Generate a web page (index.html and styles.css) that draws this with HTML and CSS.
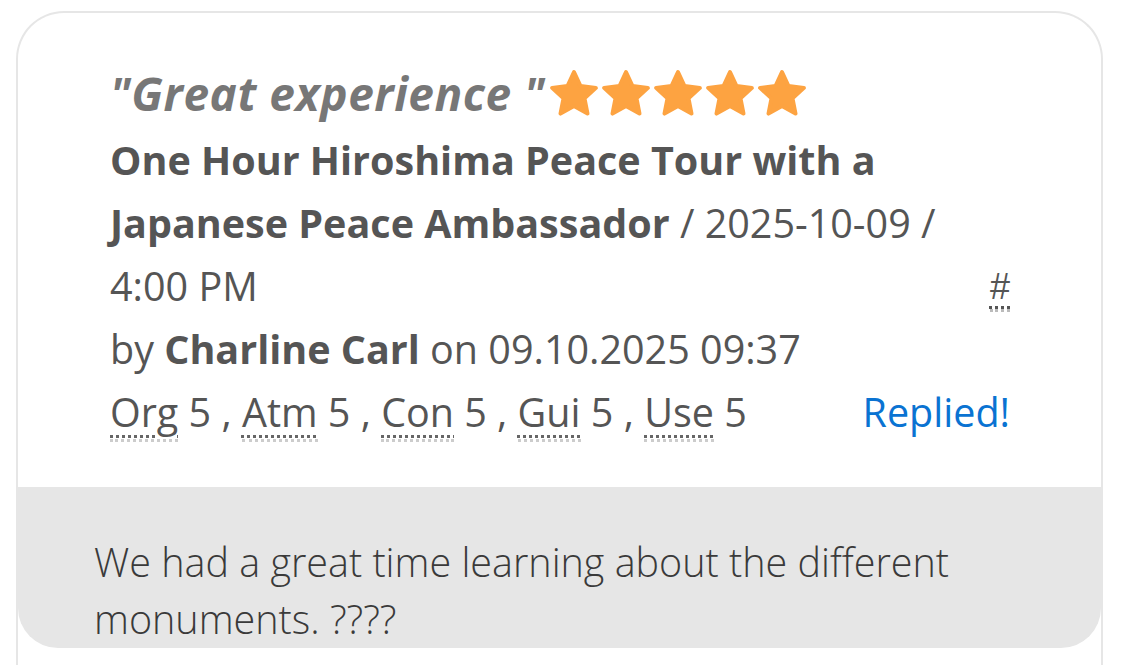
FILE: index.html
```html
<!DOCTYPE html>
<html lang="en">
<head>
<meta charset="utf-8">
<title>Review</title>
<link rel="stylesheet" href="styles.css">
</head>
<body>
<div class="card">
  <div class="head">
    <div class="title">
      <span class="quote">"Great experience "</span>
      <span class="stars">
        <svg class="star" viewBox="0 0 50 48"><path d="M25 3 L31.5 17.1 L46.9 18.9 L35.5 29.4 L38.5 44.6 L25 37 L11.5 44.6 L14.5 29.4 L3.1 18.9 L18.5 17.1 Z"/></svg>
        <svg class="star" viewBox="0 0 50 48"><path d="M25 3 L31.5 17.1 L46.9 18.9 L35.5 29.4 L38.5 44.6 L25 37 L11.5 44.6 L14.5 29.4 L3.1 18.9 L18.5 17.1 Z"/></svg>
        <svg class="star" viewBox="0 0 50 48"><path d="M25 3 L31.5 17.1 L46.9 18.9 L35.5 29.4 L38.5 44.6 L25 37 L11.5 44.6 L14.5 29.4 L3.1 18.9 L18.5 17.1 Z"/></svg>
        <svg class="star" viewBox="0 0 50 48"><path d="M25 3 L31.5 17.1 L46.9 18.9 L35.5 29.4 L38.5 44.6 L25 37 L11.5 44.6 L14.5 29.4 L3.1 18.9 L18.5 17.1 Z"/></svg>
        <svg class="star" viewBox="0 0 50 48"><path d="M25 3 L31.5 17.1 L46.9 18.9 L35.5 29.4 L38.5 44.6 L25 37 L11.5 44.6 L14.5 29.4 L3.1 18.9 L18.5 17.1 Z"/></svg>
      </span>
    </div>
    <div class="product-row">
      <p class="product"><strong>One Hour Hiroshima Peace Tour with a Japanese Peace Ambassador</strong> / 2025-10-09 / 4:00 PM</p>
      <a class="anchor" href="#"><abbr title="Permalink">#</abbr></a>
    </div>
    <p class="byline">by <strong>Charline Carl</strong> on 09.10.2025 09:37</p>
    <div class="ratings-row">
      <p class="ratings"><abbr title="Organisation">Org</abbr> 5 , <abbr title="Atmosphere">Atm</abbr> 5 , <abbr title="Content">Con</abbr> 5 , <abbr title="Guide">Gui</abbr> 5 , <abbr title="Usefulness">Use</abbr> 5</p>
      <span class="replied">Replied!</span>
    </div>
  </div>
  <div class="body">
    <p>We had a great time learning about the different monuments. ????</p>
  </div>
</div>
</body>
</html>
```

FILE: styles.css
```css
* { box-sizing: border-box; }
html, body {
  margin: 0;
  padding: 0;
  background: #fff;
  overflow: hidden;
}
body {
  font-family: "Open Sans", "Noto Sans", "DejaVu Sans", sans-serif;
  color: #555;
}
.card {
  margin: 11px 18px 0 16px;
  border: 2px solid #e6e6e6;
  border-bottom: none;
  border-radius: 48px 48px 0 0;
  height: 700px;
}
.head {
  padding: 44px 91px 43px 92px;
}
.title {
  display: flex;
  align-items: center;
  height: 72px;
}
.quote {
  font-style: italic;
  font-weight: 700;
  font-size: 46px;
  color: #777;
  letter-spacing: 0.5px;
  white-space: pre;
}
.stars {
  display: flex;
  gap: 2px;
  margin-left: 4px;
}
.star {
  width: 50px;
  height: 48px;
  fill: #fda341;
  stroke: #fda341;
  stroke-width: 4;
  stroke-linejoin: round;
}
p { margin: 0; }
.product-row {
  display: flex;
  align-items: flex-end;
}
.product, .byline, .ratings, .replied {
  font-size: 39.5px;
  line-height: 63px;
}
.product { flex: 1; }
strong { font-weight: 700; color: #555; }
.anchor {
  margin-left: 8px;
  color: #555;
  text-decoration: none;
  font-family: "Liberation Sans", Arial, sans-serif;
  font-size: 36px;
  line-height: 63px;
}
.anchor abbr {
  text-decoration: underline dotted #555;
  text-underline-offset: 7px;
  text-decoration-thickness: 3px;
  border-bottom: 3px dotted #bbb;
  padding-bottom: 2px;
}
.ratings-row {
  display: flex;
  justify-content: space-between;
  align-items: baseline;
}
.ratings abbr {
  text-decoration: underline dotted #666;
  text-decoration-thickness: 3px;
  text-underline-offset: 8px;
  border-bottom: 3px dotted #ccc;
}
.replied {
  color: #0a73d2;
}
.body {
  background: #e6e6e6;
  border-radius: 0 0 40px 40px;
  padding: 47px 60px 0 76px;
  height: 161px;
}
.body p {
  font-size: 39.5px;
  font-weight: 300;
  line-height: 57px;
  color: #3a3a3a;
}
```
